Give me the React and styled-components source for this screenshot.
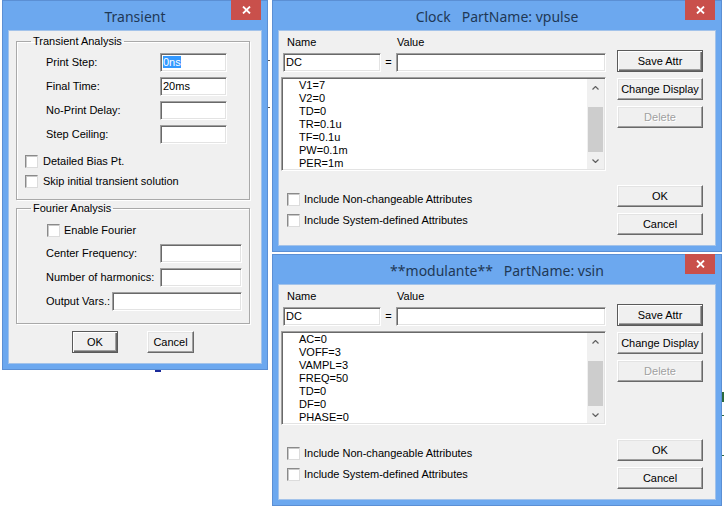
import React from "react";
import styled, { createGlobalStyle, css } from "styled-components";

const GlobalStyle = createGlobalStyle`
  html, body { margin: 0; padding: 0; background: #fff; }
  body { font-family: "Liberation Sans", Arial, sans-serif; }
`;

const clockAttrs = ["V1=7", "V2=0", "TD=0", "TR=0.1u", "TF=0.1u", "PW=0.1m", "PER=1m"];
const sinAttrs = ["AC=0", "VOFF=3", "VAMPL=3", "FREQ=50", "TD=0", "DF=0", "PHASE=0"];

const CloseIcon = () => (
  <svg width="9" height="8" viewBox="0 0 9 8">
    <path d="M1 0.5 L8 7.5 M8 0.5 L1 7.5" stroke="#fff" strokeWidth="1.8" />
  </svg>
);

const Chevron = ({ up }) => (
  <svg width="7" height="4" viewBox="0 0 7 4">
    <path
      d={up ? "M0.5 3.5 L3.5 0.5 L6.5 3.5" : "M0.5 0.5 L3.5 3.5 L6.5 0.5"}
      stroke="#606060"
      strokeWidth="1.2"
      fill="none"
    />
  </svg>
);

const Frame = ({ x, y, w, h, title, children }) => (
  <Window $x={x} $y={y} $w={w} $h={h}>
    <TitleBar>
      <Title>{title}</Title>
      <CloseButton>
        <CloseIcon />
      </CloseButton>
    </TitleBar>
    {children}
  </Window>
);

const Check = ({ label, indent = 0, gap = 5 }) => (
  <CheckRow $indent={indent} $gap={gap}>
    <CheckBox />
    <span>{label}</span>
  </CheckRow>
);

const Field = ({ label, labelWidth, inputWidth, value, selected }) => (
  <FieldRow>
    <FieldLabel $w={labelWidth}>{label}</FieldLabel>
    <TextBox $w={inputWidth}>
      {selected ? <Selected>{value}</Selected> : value}
    </TextBox>
  </FieldRow>
);

const PartDialog = ({ y, title, attrs }) => (
  <Frame x={272} y={y} w={450} h={252} title={title}>
    <PartBody>
      <LeftColumn>
        <HeaderRow>
          <span>Name</span>
          <span>Value</span>
        </HeaderRow>
        <EntryRow>
          <TextBox $w={98}>DC</TextBox>
          <Equals>=</Equals>
          <TextBox $w={210} />
        </EntryRow>
        <ListBox>
          <ListItems>
            {attrs.map((a) => (
              <ListItem key={a}>{a}</ListItem>
            ))}
          </ListItems>
          <ScrollBar>
            <ScrollArrow>
              <Chevron up />
            </ScrollArrow>
            <ScrollTrack>
              <ScrollThumb />
            </ScrollTrack>
            <ScrollArrow>
              <Chevron />
            </ScrollArrow>
          </ScrollBar>
        </ListBox>
        <PartChecks>
          <Check label="Include Non-changeable Attributes" indent={6} gap={4} />
          <Check label="Include System-defined Attributes" indent={6} gap={4} />
        </PartChecks>
      </LeftColumn>
      <RightColumn>
        <Button $w={86} $default>Save Attr</Button>
        <Button $w={86}>Change Display</Button>
        <Button $w={86} $disabled>Delete</Button>
        <Button $w={86} $spaced>OK</Button>
        <Button $w={86}>Cancel</Button>
      </RightColumn>
    </PartBody>
  </Frame>
);

const App = () => (
  <>
    <GlobalStyle />
    <Desktop>
      <Wire $x={155} $y={370} $w={6} $h={2} $c="#1a2a9a" />
      <Wire $x={268} $y={60} $w={2} $h={1} $c="#555" />
      <Wire $x={268} $y={107} $w={2} $h={1} $c="#555" />
      <Wire $x={722} $y={392} $w={2} $h={10} $c="#2c6a3c" />
      <Wire $x={722} $y={415} $w={2} $h={1} $c="#2c6a3c" />
      <Wire $x={722} $y={455} $w={2} $h={1} $c="#2c6a3c" />

      <Frame x={2} y={0} w={266} h={370} title="Transient">
        <TransientBody>
          <Group $pad="5px 0 11px 8px">
            <Legend>Transient Analysis</Legend>
            <FieldStack>
              <Field label="Print Step:" labelWidth={114} inputWidth={67} value="0ns" selected />
              <Field label="Final Time:" labelWidth={114} inputWidth={67} value="20ms" />
              <Field label="No-Print Delay:" labelWidth={114} inputWidth={67} />
              <Field label="Step Ceiling:" labelWidth={114} inputWidth={67} />
            </FieldStack>
            <CheckStack>
              <Check label="Detailed Bias Pt." />
              <Check label="Skip initial transient solution" />
            </CheckStack>
          </Group>
          <Group $pad="9px 0 12px 8px" $top={2}>
            <Legend>Fourier Analysis</Legend>
            <Check label="Enable Fourier" indent={22} gap={4} />
            <FieldStack $top={7}>
              <Field label="Center Frequency:" labelWidth={114} inputWidth={82} />
              <Field label="Number of harmonics:" labelWidth={114} inputWidth={82} />
              <Field label="Output Vars.:" labelWidth={66} inputWidth={130} />
            </FieldStack>
          </Group>
          <ButtonRow>
            <Button $w={46} $default>OK</Button>
            <Button $w={47}>Cancel</Button>
          </ButtonRow>
        </TransientBody>
      </Frame>

      <PartDialog y={0} title={"Clock   PartName: vpulse"} attrs={clockAttrs} />
      <PartDialog y={254} title={"**modulante**   PartName: vsin"} attrs={sinAttrs} />
    </Desktop>
  </>
);

const Desktop = styled.div`
  position: relative;
  width: 724px;
  height: 510px;
  overflow: hidden;
  background: #fff;
`;

const Wire = styled.div`
  position: absolute;
  left: ${(p) => p.$x}px;
  top: ${(p) => p.$y}px;
  width: ${(p) => p.$w}px;
  height: ${(p) => p.$h}px;
  background: ${(p) => p.$c};
`;

const Window = styled.div`
  position: absolute;
  left: ${(p) => p.$x}px;
  top: ${(p) => p.$y}px;
  width: ${(p) => p.$w}px;
  height: ${(p) => p.$h}px;
  box-sizing: border-box;
  display: flex;
  flex-direction: column;
  padding: 0 6px 6px;
  background: #6ca8ef;
  border: 1px solid #5b8fd4;
`;

const TitleBar = styled.div`
  flex-shrink: 0;
  height: 30px;
  display: grid;
  grid-template-columns: 30px 1fr 30px;
`;

const Title = styled.div`
  grid-column: 2;
  align-self: center;
  text-align: center;
  font-family: "Noto Sans", "Open Sans", sans-serif;
  font-size: 14px;
  color: #1f3856;
  white-space: pre;
  padding-top: 1px;
`;

const CloseButton = styled.div`
  grid-column: 3;
  height: 20px;
  margin-top: -1px;
  display: flex;
  align-items: center;
  justify-content: center;
  background: #c9504b;
`;

const Client = styled.div`
  flex: 1;
  background: #f0f0f0;
  box-shadow: 0 0 0 1px #a3c3ea;
  font-family: "Liberation Sans", Arial, sans-serif;
  font-size: 11px;
  line-height: 13px;
  color: #000;
`;

const TransientBody = styled(Client)`
  display: flex;
  flex-direction: column;
  padding: 4px 11px 0 7px;
`;

const Group = styled.fieldset`
  margin: ${(p) => p.$top || 0}px 0 0;
  padding: ${(p) => p.$pad};
  border: 1px solid #a9a9a9;
  box-shadow: inset 1px 1px 0 #fff, 1px 1px 0 #fff;
  min-width: 0;
`;

const Legend = styled.legend`
  margin-left: 6px;
  padding: 0 2px;
  line-height: 13px;
`;

const FieldStack = styled.div`
  display: flex;
  flex-direction: column;
  gap: 5px;
  margin-top: ${(p) => p.$top || 0}px;
`;

const FieldRow = styled.div`
  display: flex;
  align-items: center;
  height: 19px;
  padding-left: 21px;
`;

const FieldLabel = styled.span`
  width: ${(p) => p.$w}px;
  flex-shrink: 0;
`;

const TextBox = styled.div`
  width: ${(p) => p.$w}px;
  height: 19px;
  box-sizing: border-box;
  flex-shrink: 0;
  padding: 2px 0 0 2px;
  background: #fff;
  border: 1px solid;
  border-color: #a0a0a0 #fff #fff #a0a0a0;
  box-shadow: inset 1px 1px 0 #696969, inset -1px -1px 0 #e3e3e3;
  white-space: nowrap;
`;

const Selected = styled.span`
  background: #3399ff;
  color: #fff;
`;

const CheckStack = styled.div`
  display: flex;
  flex-direction: column;
  gap: 7px;
  margin-top: 11px;
`;

const CheckRow = styled.div`
  display: flex;
  align-items: center;
  gap: ${(p) => p.$gap}px;
  height: 13px;
  padding-left: ${(p) => p.$indent}px;
`;

const CheckBox = styled.span`
  width: 13px;
  height: 13px;
  box-sizing: border-box;
  flex-shrink: 0;
  background: #fff;
  border: 1px solid;
  border-color: #8a8a8a #dcdcdc #dcdcdc #8a8a8a;
  box-shadow: inset 1px 1px 0 #c8c8c8;
`;

const ButtonRow = styled.div`
  display: flex;
  gap: 29px;
  margin: 7px 0 0 56px;
`;

const Button = styled.div`
  width: ${(p) => p.$w}px;
  height: 22px;
  box-sizing: border-box;
  display: flex;
  align-items: center;
  justify-content: center;
  background: #f0f0f0;
  border: 1px solid;
  border-color: #fff #696969 #696969 #fff;
  box-shadow: inset -1px -1px 0 #a0a0a0, inset 1px 1px 0 #e3e3e3;
  white-space: nowrap;
  ${(p) =>
    p.$default &&
    css`
      border-color: #5a5a5a;
      box-shadow: inset 1px 1px 0 #fff, inset -1px -1px 0 #696969,
        inset -2px -2px 0 #a0a0a0;
    `}
  ${(p) =>
    p.$disabled &&
    css`
      color: #a0a0a0;
      text-shadow: 1px 1px 0 #fff;
    `}
  ${(p) =>
    p.$spaced &&
    css`
      margin-top: 51px;
    `}
`;

const PartBody = styled(Client)`
  display: grid;
  grid-template-columns: 326px 86px;
  column-gap: 10px;
  align-items: start;
  padding: 5px 0 0 2px;
`;

const LeftColumn = styled.div`
  display: flex;
  flex-direction: column;
`;

const HeaderRow = styled.div`
  display: grid;
  grid-template-columns: 110px auto;
  padding-left: 6px;
  height: 13px;
`;

const EntryRow = styled.div`
  display: flex;
  align-items: center;
  margin: 4px 0 0 2px;
`;

const Equals = styled.span`
  width: 15px;
  text-align: center;
`;

const ListBox = styled.div`
  display: flex;
  width: 325px;
  height: 94px;
  box-sizing: border-box;
  margin-top: 5px;
  background: #fff;
  border: 1px solid;
  border-color: #a0a0a0 #fff #fff #a0a0a0;
  box-shadow: inset 1px 1px 0 #696969, inset -1px -1px 0 #e3e3e3;
  padding: 1px;
`;

const ListItems = styled.div`
  flex: 1;
  padding-left: 16px;
`;

const ListItem = styled.div`
  height: 13px;
  line-height: 13px;
`;

const ScrollBar = styled.div`
  width: 17px;
  display: flex;
  flex-direction: column;
  background: #f0f0f0;
`;

const ScrollArrow = styled.div`
  height: 17px;
  display: flex;
  align-items: center;
  justify-content: center;
`;

const ScrollTrack = styled.div`
  flex: 1;
  padding: 11px 1px 0;
`;

const ScrollThumb = styled.div`
  height: 45px;
  background: #cdcdcd;
`;

const PartChecks = styled.div`
  display: flex;
  flex-direction: column;
  gap: 8px;
  margin-top: 22px;
`;

const RightColumn = styled.div`
  display: flex;
  flex-direction: column;
  gap: 6px;
  margin-top: 14px;
`;

export default App;
